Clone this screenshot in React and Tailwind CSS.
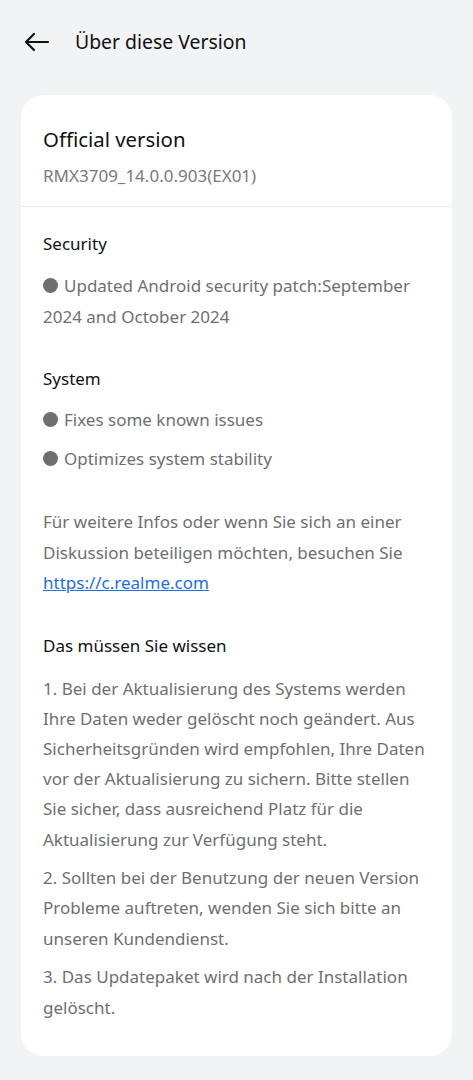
import React from 'react';

const Bullet = ({ children }) => (
  <p className="leading-[31px]">
    <span className="inline-block w-[15px] h-[15px] rounded-full bg-[#6f6f6f] mr-[6px] align-[-1px]" />
    {children}
  </p>
);

export default function App() {
  return (
    <div className="min-h-[1080px] bg-[#f2f3f5] font-['Noto_Sans',sans-serif] pb-6">
      <header className="flex items-center h-[84px] px-[24px]">
        <svg width="26" height="20" viewBox="0 0 26 20" fill="none" stroke="#111" strokeWidth="2.2" strokeLinecap="round" strokeLinejoin="round">
          <path d="M24 10H2M10 2L2 10L10 18" />
        </svg>
        <h1 className="ml-[25px] text-[19.4px] text-[#111]">Über diese Version</h1>
      </header>

      <main className="mx-[21px] mt-[11px] bg-white rounded-[22px] overflow-hidden">
        <section className="px-[22px] pt-[29px] pb-[18px]">
          <h2 className="text-[20.4px] text-[#111] leading-[30px]">Official version</h2>
          <p className="mt-[10px] text-[17px] text-[#7a7a7a] leading-[24px]">RMX3709_14.0.0.903(EX01)</p>
        </section>
        <div className="h-px bg-[#ececec]" />

        <section className="px-[22px] pt-[22px] pb-[33px] text-[17px]">
          <h3 className="text-[#111] leading-[30px]">Security</h3>
          <div className="mt-[11px] text-[#6f6f6f]">
            <Bullet>Updated Android security patch:September 2024 and October 2024</Bullet>
          </div>

          <h3 className="mt-[32px] text-[#111] leading-[30px]">System</h3>
          <div className="mt-[10px] text-[#6f6f6f] flex flex-col gap-[8px]">
            <Bullet>Fixes some known issues</Bullet>
            <Bullet>Optimizes system stability</Bullet>
          </div>

          <p className="mt-[33px] text-[#6f6f6f] leading-[30.5px]">
            Für weitere Infos oder wenn Sie sich an einer Diskussion beteiligen möchten, besuchen Sie{' '}
            <a href="#" className="text-[#1d6fe0] underline">https://c.realme.com</a>
          </p>

          <h3 className="mt-[32px] text-[#111] leading-[30px]">Das müssen Sie wissen</h3>
          <div className="mt-[13px] text-[#6f6f6f] leading-[30.2px] flex flex-col gap-[8.5px]">
            <p>1. Bei der Aktualisierung des Systems werden Ihre Daten weder gelöscht noch geändert. Aus Sicherheitsgründen wird empfohlen, Ihre Daten vor der Aktualisierung zu sichern. Bitte stellen Sie sicher, dass ausreichend Platz für die Aktualisierung zur Verfügung steht.</p>
            <p>2. Sollten bei der Benutzung der neuen Version Probleme auftreten, wenden Sie sich bitte an unseren Kundendienst.</p>
            <p>3. Das Updatepaket wird nach der Installation gelöscht.</p>
          </div>
        </section>
      </main>
    </div>
  );
}
